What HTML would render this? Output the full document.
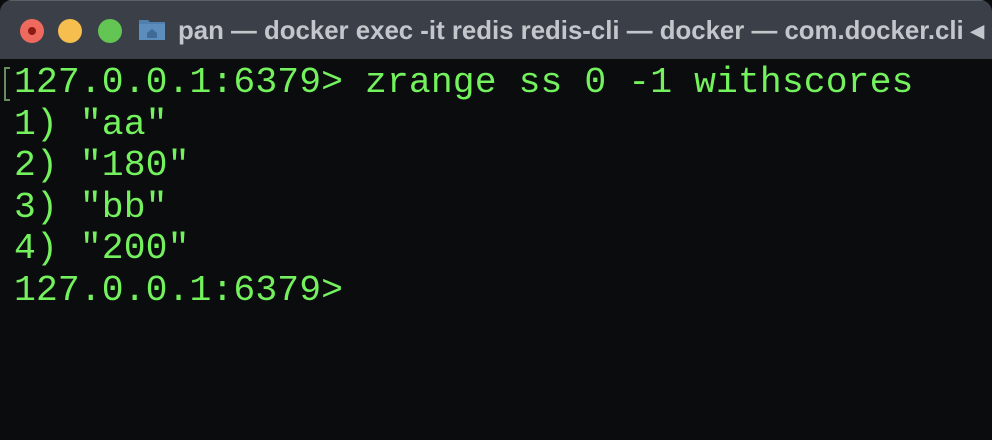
<!DOCTYPE html>
<html><head><style>
html,body{margin:0;padding:0;width:992px;height:440px;overflow:hidden;background:#0a0c0e}
.win{position:absolute;left:0;top:0;width:992px;height:440px;background:#0a0c0e;border-radius:12px 12px 0 0;overflow:hidden}
.bar{position:absolute;left:0;top:0;width:992px;height:58px;background:#3b4048;border-top:1px solid #5a6068}
.dot{position:absolute;top:18px;width:24px;height:24px;border-radius:50%}
.title{position:absolute;left:178px;top:15px;font:bold 25.8px "Liberation Sans",sans-serif;color:#c3c6cb;white-space:nowrap}
.term{position:absolute;left:14px;top:62px;font:36.4px/41.5px "Liberation Mono",monospace;letter-spacing:0.1px;color:#74f25e;white-space:pre}
.brk{position:absolute;left:4px;top:67px;width:4px;height:30px;border:2px solid #6a8a60;border-right:none}
</style></head><body>
<div class="win">
<div class="bar">
<div class="dot" style="left:20px;background:#ee6a5e"><div style="position:absolute;left:8px;top:8px;width:8px;height:8px;border-radius:50%;background:#8c1a12"></div></div>
<div class="dot" style="left:58px;background:#f5be4f"></div>
<div class="dot" style="left:98px;background:#62c554"></div>
<svg style="position:absolute;left:138px;top:15px" width="28" height="26" viewBox="0 0 28 26"><path d="M1 4h9l2 2h15v18H1z" fill="#4e7fae"/><rect x="1" y="8" width="26" height="16" fill="#5b8dbd"/><path d="M9 17l5-4 5 4v5H9z" fill="#3f6b96"/></svg>
<div class="title">pan — docker exec -it redis redis-cli — docker — com.docker.cli ◂</div>
</div>
<div class="brk"></div>
<div class="term">127.0.0.1:6379&gt; zrange ss 0 -1 withscores
1) "aa"
2) "180"
3) "bb"
4) "200"
127.0.0.1:6379&gt;</div>
</div>
</body></html>
